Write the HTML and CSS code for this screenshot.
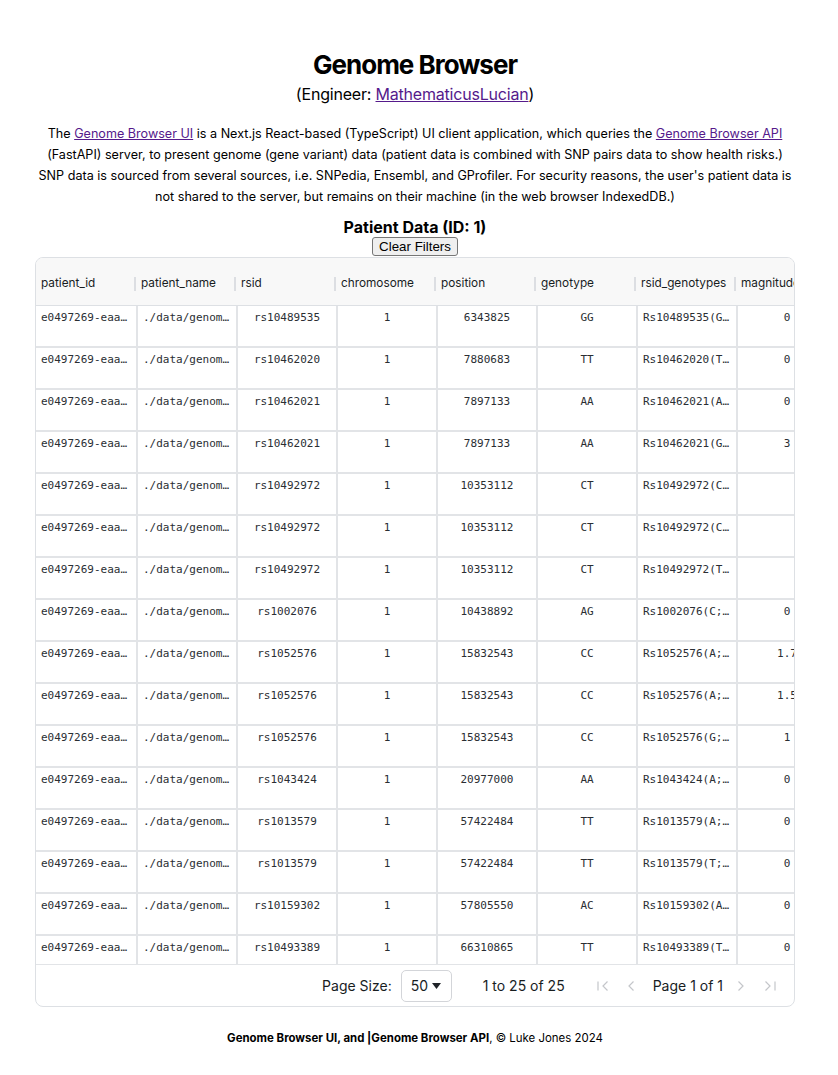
FILE: index.html
```html
<!DOCTYPE html>
<html lang="en">
<head>
<meta charset="utf-8">
<title>Genome Browser</title>
<link rel="stylesheet" href="styles.css">
</head>
<body>
<main class="page">
  <header class="intro">
    <h1 class="title">Genome Browser</h1>
    <p class="engineer">(Engineer: <a href="#">MathematicusLucian</a>)</p>
    <p class="desc">The <a href="#">Genome Browser UI</a> is a Next.js React-based (TypeScript) UI client application, which queries the <a href="#">Genome Browser API</a> (FastAPI) server, to present genome (gene variant) data (patient data is combined with SNP pairs data to show health risks.) SNP data is sourced from several sources, i.e. SNPedia, Ensembl, and GProfiler. For security reasons, the user's patient data is not shared to the server, but remains on their machine (in the web browser IndexedDB.)</p>
  </header>

  <section class="patient">
    <h2 class="patient-title">Patient Data (ID: 1)</h2>
    <button class="clear-btn" type="button">Clear Filters</button>

    <div class="grid">
      <div class="grid-head">
        <div class="hcell">patient_id</div>
        <div class="hcell">patient_name</div>
        <div class="hcell">rsid</div>
        <div class="hcell">chromosome</div>
        <div class="hcell">position</div>
        <div class="hcell">genotype</div>
        <div class="hcell">rsid_genotypes</div>
        <div class="hcell last">magnitude</div>
      </div>
      <div class="grid-body" id="body"></div>
      <div class="pager">
        <span class="pager-label">Page Size:</span>
        <span class="page-size">50 <svg class="caret" width="9" height="6" viewBox="0 0 9 6"><path d="M0 0 H9 L4.5 6 Z" fill="#1f2328"/></svg></span>
        <span class="pager-count">1 to 25 of 25</span>
        <span class="pager-nav">
          <svg class="nav-icon first" width="16" height="16" viewBox="0 0 16 16"><path d="M3 3.5 V12.5 M12.5 3.5 L8 8 L12.5 12.5" fill="none" stroke="#c4c6ca" stroke-width="1.2"/></svg>
          <svg class="nav-icon prev" width="16" height="16" viewBox="0 0 16 16"><path d="M10.5 3.5 L6 8 L10.5 12.5" fill="none" stroke="#c4c6ca" stroke-width="1.2"/></svg>
          <span class="pager-page">Page 1 of 1</span>
          <svg class="nav-icon next" width="16" height="16" viewBox="0 0 16 16"><path d="M5.5 3.5 L10 8 L5.5 12.5" fill="none" stroke="#c4c6ca" stroke-width="1.2"/></svg>
          <svg class="nav-icon last" width="16" height="16" viewBox="0 0 16 16"><path d="M3.5 3.5 L8 8 L3.5 12.5 M13 3.5 V12.5" fill="none" stroke="#c4c6ca" stroke-width="1.2"/></svg>
        </span>
      </div>
    </div>
  </section>

  <footer class="footer"><strong>Genome Browser UI, and |Genome Browser API</strong>, © Luke Jones 2024</footer>
</main>
<script>
  var rows = [
    ["rs10489535","6343825","GG","Rs10489535(G…","0"],
    ["rs10462020","7880683","TT","Rs10462020(T…","0"],
    ["rs10462021","7897133","AA","Rs10462021(A…","0"],
    ["rs10462021","7897133","AA","Rs10462021(G…","3"],
    ["rs10492972","10353112","CT","Rs10492972(C…",""],
    ["rs10492972","10353112","CT","Rs10492972(C…",""],
    ["rs10492972","10353112","CT","Rs10492972(T…",""],
    ["rs1002076","10438892","AG","Rs1002076(C;…","0"],
    ["rs1052576","15832543","CC","Rs1052576(A;…","1.7"],
    ["rs1052576","15832543","CC","Rs1052576(A;…","1.5"],
    ["rs1052576","15832543","CC","Rs1052576(G;…","1"],
    ["rs1043424","20977000","AA","Rs1043424(A;…","0"],
    ["rs1013579","57422484","TT","Rs1013579(A;…","0"],
    ["rs1013579","57422484","TT","Rs1013579(T;…","0"],
    ["rs10159302","57805550","AC","Rs10159302(A…","0"],
    ["rs10493389","66310865","TT","Rs10493389(T…","0"]
  ];
  var body = document.getElementById("body");
  var html = "";
  rows.forEach(function (r) {
    html += '<div class="row">' +
      '<div class="cell left">e0497269-eaa…</div>' +
      '<div class="cell left">./data/genom…</div>' +
      '<div class="cell center">' + r[0] + '</div>' +
      '<div class="cell center">1</div>' +
      '<div class="cell center">' + r[1] + '</div>' +
      '<div class="cell center">' + r[2] + '</div>' +
      '<div class="cell left">' + r[3] + '</div>' +
      '<div class="cell center">' + r[4] + '</div>' +
      '</div>';
  });
  body.innerHTML = html;
</script>
</body>
</html>
```

FILE: styles.css
```css
* { box-sizing: border-box; }

html, body {
  margin: 0;
  padding: 0;
  background: #ffffff;
}

body {
  font-family: Inter, "Noto Sans", "Liberation Sans", sans-serif;
  color: #000;
}

a { color: #551a8b; text-decoration: underline; }

.page {
  width: 760px;
  margin-left: 35px;
  padding-top: 49px;
}

.intro { text-align: center; }

.title {
  margin: 0;
  font-size: 26px;
  line-height: 32px;
  font-weight: 700;
  letter-spacing: -1px;
}

.engineer {
  margin: 3px 0 0;
  font-size: 16px;
  line-height: 20px;
  letter-spacing: -0.2px;
}

.desc {
  margin: 19px 0 0;
  font-size: 12.6px;
  line-height: 21px;
}

.patient {
  margin-top: 10px;
  display: flex;
  flex-direction: column;
  align-items: center;
}

.patient-title {
  margin: 0;
  font-size: 16px;
  line-height: 20px;
  font-weight: 700;
}

.clear-btn {
  font-family: "Liberation Sans", Arial, sans-serif;
  font-size: 13.33px;
  height: 19px;
  line-height: 15px;
  padding: 0 6px;
  background: #efefef;
  border: 1px solid #767676;
  border-radius: 3px;
  color: #000;
}

.grid {
  margin-top: 1px;
  width: 760px;
  border: 1px solid #dde0e4;
  border-radius: 8px;
  overflow: hidden;
  display: flex;
  flex-direction: column;
}

.grid-head {
  display: flex;
  height: 48px;
  padding-top: 2px;
  background: #f8f8f8;
  border-bottom: 1px solid #dde0e4;
  overflow: hidden;
  font-size: 11.8px;
  color: #181d1f;
}

.hcell {
  flex: 0 0 100px;
  position: relative;
  padding-left: 5px;
  display: flex;
  align-items: center;
  white-space: nowrap;
}

.hcell::after {
  content: "";
  position: absolute;
  right: 0;
  top: 17px;
  width: 2px;
  height: 14px;
  background: #dcdee2;
}

.hcell.last::after { display: none; }

.grid-body {
  height: 658px;
  overflow: hidden;
}

.row {
  display: flex;
  height: 42px;
  border-bottom: 2px solid #e2e4e7;
}

.cell {
  flex: 0 0 100px;
  border-left: 2px solid #e2e4e7;
  font-family: "DejaVu Sans Mono", "Liberation Mono", monospace;
  font-size: 11px;
  line-height: 24px;
  color: #2a2e33;
  padding: 0 5px;
  white-space: nowrap;
  overflow: hidden;
}

.cell:first-child { border-left: 0; }

.cell.left { text-align: left; }
.cell.center { text-align: center; }

.pager {
  height: 42px;
  border-top: 1px solid #e2e4e7;
  display: flex;
  align-items: center;
  justify-content: flex-end;
  padding-right: 16px;
  font-size: 14px;
  color: #181d1f;
}

.pager-label { margin-right: 9px; }

.page-size {
  width: 51px;
  height: 32px;
  border: 1px solid #d3d5d9;
  border-radius: 5px;
  display: flex;
  align-items: center;
  gap: 4px;
  padding-left: 9px;
}

.caret { display: block; }

.pager-count { margin-left: 31px; }

.pager-nav {
  margin-left: 30px;
  display: flex;
  align-items: center;
}

.nav-icon { display: block; }
.nav-icon.prev { margin-left: 12px; }
.pager-page { margin: 0 10px 0 14px; }
.nav-icon.last { margin-left: 13px; }

.footer {
  margin-top: 24px;
  text-align: center;
  font-size: 11.45px;
  line-height: 14px;
  padding-bottom: 20px;
}

.footer strong { font-weight: 700; }
```
